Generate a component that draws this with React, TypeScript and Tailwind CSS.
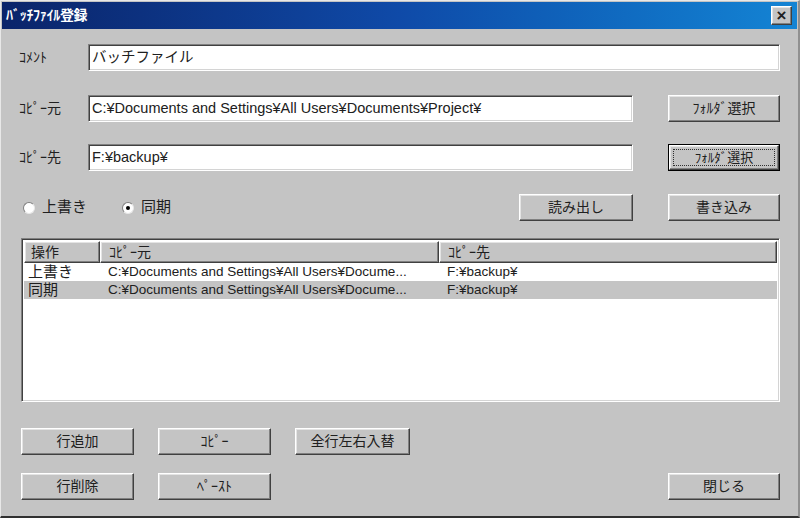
import React from 'react';

const raised =
  'bg-[#c4c4c4] border border-t-white border-l-white border-r-[#404040] border-b-[#404040] shadow-[inset_-1px_-1px_0_#808080,inset_1px_1px_0_#e4e4e4]';
const sunken =
  'bg-white border border-t-[#808080] border-l-[#808080] border-r-white border-b-white shadow-[inset_1px_1px_0_#404040,inset_-1px_-1px_0_#d4d4d4]';

function Button({ label, w = 'w-[113px]', focus = false }: { label: string; w?: string; focus?: boolean }) {
  if (focus) {
    return (
      <div className={`${w} h-[27px] border border-black`}>
        <div className={`${raised} h-full flex items-center justify-center p-[3px]`}>
          <div className="w-full h-full border border-dotted border-[#303030] flex items-center justify-center text-[13px] text-[#202020]">
            {label}
          </div>
        </div>
      </div>
    );
  }
  return (
    <div className={`${w} h-[27px] ${raised} flex items-center justify-center text-[14px] text-[#202020]`}>
      {label}
    </div>
  );
}

function Field({ value, w = 'flex-1' }: { value: string; w?: string }) {
  return (
    <div className={`${w} h-[27px] ${sunken} flex items-center pl-[3px] text-[14.5px] text-[#202020] whitespace-nowrap overflow-hidden`}>
      {value}
    </div>
  );
}

function Radio({ label, checked }: { label: string; checked?: boolean }) {
  return (
    <div className="flex items-center gap-[7px]">
      <div className="w-[12px] h-[12px] rounded-full bg-white border border-t-[#808080] border-l-[#808080] border-r-[#e8e8e8] border-b-[#e8e8e8] flex items-center justify-center">
        {checked && <div className="w-[4px] h-[4px] rounded-full bg-black" />}
      </div>
      <span className="text-[15px] text-[#202020]">{label}</span>
    </div>
  );
}

// list columns are drawn already shortened, as the list view shows them
const rows = [
  { op: '上書き', from: 'C:¥Documents and Settings¥All Users¥Docume...', to: 'F:¥backup¥', sel: false },
  { op: '同期', from: 'C:¥Documents and Settings¥All Users¥Docume...', to: 'F:¥backup¥', sel: true },
];

export default function App() {
  return (
    <div className="w-[800px] h-[518px] bg-[#c4c4c4] flex flex-col border-t border-l border-t-[#e8e8e8] border-l-[#e8e8e8] border-b-2 border-b-[#303030] border-r-2 border-r-[#909090] font-['Liberation_Sans','Noto_Sans_CJK_JP',sans-serif] overflow-hidden">
      {/* Title bar */}
      <div className="h-[27px] mx-[1px] mt-[1px] bg-gradient-to-r from-[#0a246a] via-[#0f4aa8] to-[#1484d4] flex items-center justify-between pl-[4px] pr-[5px]">
        <span className="text-white text-[14px] font-bold tracking-[-0.3px]">ﾊﾞｯﾁﾌｧｲﾙ登録</span>
        <div className={`w-[21px] h-[19px] ${raised} flex items-center justify-center text-[17px] font-bold leading-none text-[#202020]`}>
          ×
        </div>
      </div>

      <div className="flex-1 flex flex-col pl-[18px] pr-[18px]">
        {/* Comment */}
        <div className="flex items-center mt-[15px]">
          <span className="w-[69px] text-[14px] text-[#202020]">ｺﾒﾝﾄ</span>
          <Field value="バッチファイル" />
        </div>

        {/* Copy from */}
        <div className="flex items-center mt-[24px]">
          <span className="w-[69px] text-[14px] text-[#202020]">ｺﾋﾟｰ元</span>
          <Field value="C:¥Documents and Settings¥All Users¥Documents¥Project¥" w="w-[545px]" />
          <div className="ml-auto">
            <Button label="ﾌｫﾙﾀﾞ選択" w="w-[112px]" />
          </div>
        </div>

        {/* Copy to */}
        <div className="flex items-center mt-[22px]">
          <span className="w-[69px] text-[14px] text-[#202020]">ｺﾋﾟｰ先</span>
          <Field value="F:¥backup¥" w="w-[545px]" />
          <div className="ml-auto">
            <Button label="ﾌｫﾙﾀﾞ選択" w="w-[112px]" focus />
          </div>
        </div>

        {/* Radios and read/write */}
        <div className="flex items-center mt-[23px] pl-[4px]">
          <div className="flex items-center gap-[35px]">
            <Radio label="上書き" />
            <Radio label="同期" checked />
          </div>
          <div className="ml-auto flex gap-[35px]">
            <Button label="読み出し" w="w-[114px]" />
            <Button label="書き込み" w="w-[112px]" />
          </div>
        </div>

        {/* List view */}
        <div className={`mt-[17px] ml-[2px] h-[164px] ${sunken} p-[2px] flex flex-col`}>
          <div className="flex h-[22px] text-[14px] text-[#202020]">
            <div className={`w-[76px] ${raised} pl-[6px] flex items-center`}>操作</div>
            <div className={`w-[339px] ${raised} pl-[8px] flex items-center`}>ｺﾋﾟｰ元</div>
            <div className={`flex-1 ${raised} pl-[8px] flex items-center`}>ｺﾋﾟｰ先</div>
          </div>
          {rows.map((r) => (
            <div
              key={r.op}
              className={`flex h-[18px] items-center text-[14px] text-[#202020] ${r.sel ? 'bg-[#c4c4c4]' : 'bg-white'}`}
            >
              <div className="w-[76px] pl-[4px] text-[15px]">{r.op}</div>
              <div className="w-[339px] pl-[8px] whitespace-nowrap text-[13.5px]">{r.from}</div>
              <div className="flex-1 pl-[8px] text-[13.5px]">{r.to}</div>
            </div>
          ))}
        </div>

        {/* Bottom buttons */}
        <div className="flex items-center mt-[26px] pl-[2px] gap-[24px]">
          <Button label="行追加" />
          <Button label="ｺﾋﾟｰ" />
          <Button label="全行左右入替" w="w-[115px]" />
        </div>
        <div className="flex items-center mt-[18px] pl-[2px] gap-[24px]">
          <Button label="行削除" />
          <Button label="ﾍﾟｰｽﾄ" />
          <div className="ml-auto">
            <Button label="閉じる" w="w-[112px]" />
          </div>
        </div>
      </div>
    </div>
  );
}
